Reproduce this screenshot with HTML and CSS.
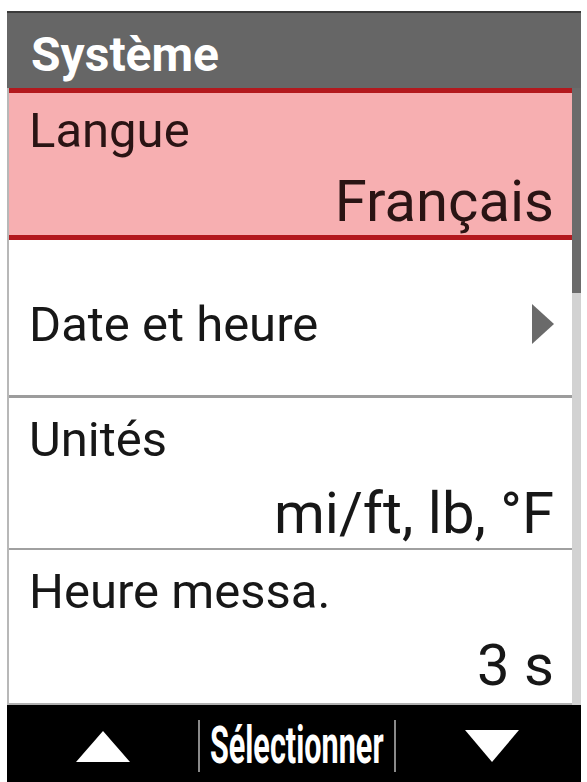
FILE: index.html
```html
<!DOCTYPE html>
<html lang="fr">
<head>
<meta charset="utf-8">
<title>Système</title>
<link rel="stylesheet" href="styles.css">
</head>
<body>
<div class="screen">
  <div class="header">Système</div>
  <div class="body">
    <div class="list">
      <div class="item item-selected">
        <div class="label">Langue</div>
        <div class="value value-selected">Français</div>
      </div>
      <div class="item item-link">
        <div class="label">Date et heure</div>
        <svg class="chevron" width="22" height="40" viewBox="0 0 22 40"><polygon points="0,0 22,20 0,40"/></svg>
      </div>
      <div class="item item-units">
        <div class="label">Unités</div>
        <div class="value">mi/ft, lb, °F</div>
      </div>
      <div class="item item-last">
        <div class="label">Heure messa.</div>
        <div class="value">3 s</div>
      </div>
    </div>
    <div class="scrollbar"><div class="thumb"></div></div>
  </div>
  <div class="footer">
    <div class="fbtn"><svg width="54" height="31" viewBox="0 0 54 31"><polygon points="0,31 27,0 54,31"/></svg></div>
    <div class="fsep"></div>
    <div class="fbtn"><span class="ftext">Sélectionner</span></div>
    <div class="fsep"></div>
    <div class="fbtn fbtn-right"><svg width="54" height="32" viewBox="0 0 54 32"><polygon points="0,0 54,0 27,32"/></svg></div>
  </div>
</div>
</body>
</html>
```
FILE: styles.css
```css
html, body {
  margin: 0;
  padding: 0;
  background: #ffffff;
  overflow: hidden;
}
body {
  font-family: Roboto, "Liberation Sans", sans-serif;
}
.screen {
  margin: 11px 0 0 7px;
  width: 574px;
  border-top: 2px solid #3a3a3a;
}
.header {
  height: 75px;
  box-sizing: border-box;
  background: #666666;
  color: #ffffff;
  font-weight: 700;
  font-size: 48px;
  line-height: 67px;
  padding: 8px 0 0 24px;
}
.body {
  display: flex;
  border-left: 2px solid #b8b8b8;
}
.list {
  width: 563px;
}
.scrollbar {
  width: 9px;
  background: #d2d2d2;
}
.thumb {
  height: 205px;
  background: #6b6b6b;
}
.item {
  box-sizing: border-box;
  padding: 18px 18px 0 20px;
  background: #ffffff;
  color: #171717;
}
.label {
  font-size: 49px;
  line-height: 47px;
}
.value {
  font-size: 58px;
  line-height: 56px;
  text-align: right;
  margin-top: 22px;
}
.item-selected {
  height: 152px;
  padding-top: 14px;
  background: #f7afb1;
  border-top: 5px solid #b3191e;
  border-bottom: 5px solid #b3191e;
  color: #2a1414;
}
.value-selected {
  margin-top: 19px;
}
.item-link {
  height: 158px;
  padding-top: 13px;
  display: flex;
  align-items: center;
  justify-content: space-between;
  border-bottom: 3px solid #9c9c9c;
}
.chevron {
  fill: #6a6a6a;
  display: block;
}
.item-units {
  height: 152px;
  border-bottom: 2px solid #a0a0a0;
}
.item-last {
  height: 155px;
  border-bottom: 2px solid #b0b0b0;
}
.footer {
  height: 77px;
  box-sizing: border-box;
  padding-top: 5px;
  background: #000000;
  display: grid;
  grid-template-columns: 191px 2px 194px 2px 1fr;
  align-items: center;
}
.fbtn {
  display: flex;
  justify-content: center;
  align-items: center;
  height: 72px;
}
.fbtn svg {
  display: block;
  fill: #ffffff;
}
.fbtn-right {
  padding-left: 7px;
}
.fsep {
  height: 52px;
  background: #8a8a8a;
}
.ftext {
  flex: none;
  display: inline-block;
  color: #ffffff;
  font-weight: 700;
  font-size: 51px;
  line-height: 72px;
  white-space: nowrap;
  transform: scaleX(0.6);
  transform-origin: center;
}
```
